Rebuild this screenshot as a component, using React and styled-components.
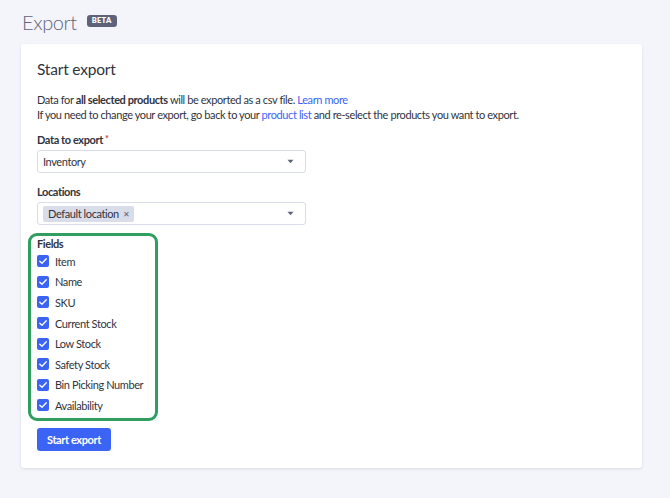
import React from 'react'
import styled, { createGlobalStyle } from 'styled-components'

const COLOR = {
  BG: '#f4f5fa',
  TEXT: '#313440',
  MUTED: '#5e637a',
  BLUE: '#3c64f4',
  BORDER: '#d9dce9',
  GREEN: '#2f9e5f',
}

const FIELDS = [
  'Item',
  'Name',
  'SKU',
  'Current Stock',
  'Low Stock',
  'Safety Stock',
  'Bin Picking Number',
  'Availability',
]

const GlobalStyle = createGlobalStyle`
  body {
    margin: 0;
    background: ${COLOR.BG};
    font-family: Lato, "Noto Sans", sans-serif;
    color: ${COLOR.TEXT};
    letter-spacing: -0.4px;
  }
`

const Caret = () => (
  <svg width='7' height='5' viewBox='0 0 7 5'>
    <path d='M0.5 0.8 L6.5 0.8 L3.5 4.2 Z' fill={COLOR.MUTED} />
  </svg>
)

const Check = () => (
  <svg width='12' height='12' viewBox='0 0 12 12'>
    <path d='M2.8 6.2 L5 8.3 L9.3 3.8' fill='none' stroke='#fff' strokeWidth='1.3' strokeLinecap='round' strokeLinejoin='round' />
  </svg>
)

const App = () => (
  <>
    <GlobalStyle />
    <Page>
      <Header>
        <Title>Export</Title>
        <Badge>BETA</Badge>
      </Header>
      <Card>
        <CardTitle>Start export</CardTitle>
        <Text>
          Data for <b>all selected products</b> will be exported as a csv file. <A>Learn more</A>
          <br />
          If you need to change your export, go back to your <A>product list</A> and re-select the products you want to export.
        </Text>
        <Field>
          <Label>Data to export <Req>*</Req></Label>
          <Select>
            <span>Inventory</span>
            <Caret />
          </Select>
        </Field>
        <Field>
          <Label>Locations</Label>
          <Select>
            <Chip>Default location <X>✕</X></Chip>
            <Caret />
          </Select>
        </Field>
        <FieldsGroup>
          <GroupLabel>Fields</GroupLabel>
          {FIELDS.map((f) => (
            <Row key={f}>
              <Box><Check /></Box>
              <span>{f}</span>
            </Row>
          ))}
        </FieldsGroup>
        <Button>Start export</Button>
      </Card>
    </Page>
  </>
)

const Page = styled.div`
  padding: 9px 28px 30px 21px;
`

const Header = styled.div`
  display: flex;
  align-items: center;
  gap: 10px;
  height: 26px;
  margin-bottom: 9px;
`

const Title = styled.h1`
  margin: 0 0 0 1px;
  font-size: 20px;
  font-weight: 300;
  letter-spacing: -0.4px;
  color: ${COLOR.MUTED};
  line-height: 26px;
`

const Badge = styled.span`
  background: ${COLOR.MUTED};
  color: #fff;
  font-size: 7.5px;
  font-weight: 800;
  letter-spacing: 0.3px;
  padding: 2px 5px;
  border-radius: 3px;
  line-height: 8px;
  margin-top: -3px;
`

const Card = styled.div`
  background: #fff;
  border-radius: 3px;
  box-shadow: 0 1px 3px rgba(49, 52, 64, 0.12);
  padding: 15px 16px 17px;
`

const CardTitle = styled.h2`
  margin: 0 0 13px;
  font-size: 15.5px;
  font-weight: 400;
  letter-spacing: -0.2px;
  line-height: 20px;
`

const Text = styled.p`
  margin: 0 0 10px;
  font-size: 11px;
  line-height: 15px;
  b { font-weight: 700; }
`

const A = styled.span`
  color: ${COLOR.BLUE};
`

const Field = styled.div`
  margin-bottom: 12px;
`

const Label = styled.div`
  font-size: 11px;
  font-weight: 700;
  line-height: 14px;
  margin-bottom: 3px;
`

const GroupLabel = styled(Label)`
  margin-bottom: 0;
`

const Req = styled.span`
  color: #c93b3b;
  font-size: 9px;
  vertical-align: 2px;
`

const Select = styled.div`
  box-sizing: border-box;
  width: 269px;
  height: 23px;
  border: 1px solid ${COLOR.BORDER};
  border-radius: 3px;
  display: flex;
  align-items: center;
  justify-content: space-between;
  padding: 0 11px 0 5px;
  font-size: 11px;
`

const Chip = styled.span`
  background: ${COLOR.BORDER};
  border-radius: 2px;
  padding: 1px 5px;
  line-height: 14px;
  display: inline-flex;
  align-items: center;
  gap: 4px;
`

const X = styled.span`
  font-size: 8px;
  color: ${COLOR.MUTED};
`

const FieldsGroup = styled.div`
  width: 112px;
  margin: -4px 0 7px -9px;
  padding: 1px 6px 2px 6px;
  border: 3px solid ${COLOR.GREEN};
  border-radius: 9px;
`

const Row = styled.div`
  display: flex;
  align-items: center;
  gap: 6px;
  height: 20.6px;
  font-size: 11px;
`

const Box = styled.span`
  width: 12px;
  height: 12px;
  border-radius: 2px;
  background: ${COLOR.BLUE};
  display: flex;
`

const Button = styled.button`
  background: ${COLOR.BLUE};
  color: #fff;
  border: none;
  border-radius: 3px;
  font-family: inherit;
  font-size: 11px;
  font-weight: 700;
  letter-spacing: inherit;
  height: 23px;
  padding: 0 10px;
`

export default App
